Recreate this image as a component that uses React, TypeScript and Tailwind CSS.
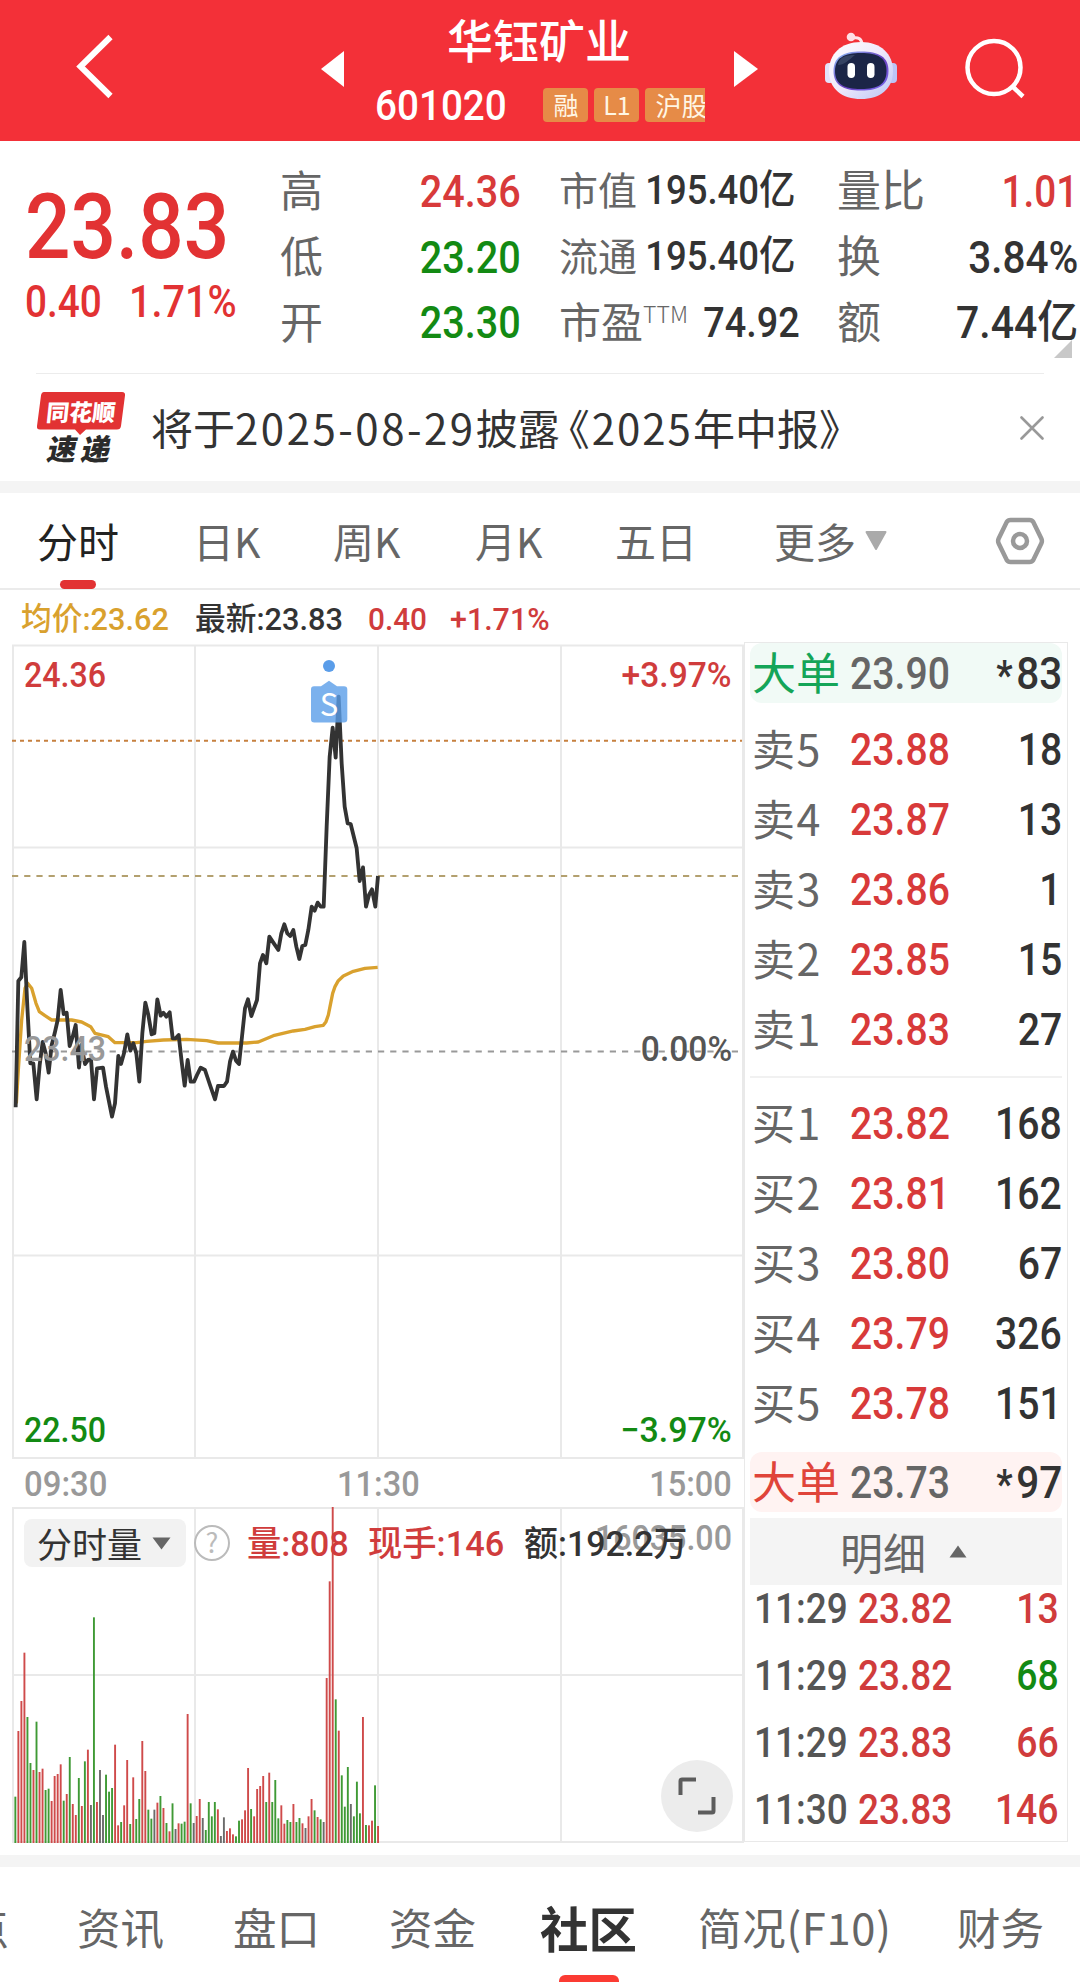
import React from "react";

const RED = "#e23233";

/* One-minute volume bars: [top edge in chart units, tone] where r = up, g = down, k = flat */
const BARS =
  "1190g 993r 903r 758r 951g 1089g 1110r 965g 1116r 1106r 1170g 1166g 1203r 1128r 1122r 1093r 1202g 1182r 1071g 1212r 1245r 1134g 1218r 1084g 1049r 1215k 652g 1206r 1110k 1245k 1124g 1175g 1164g 1034r 1276r 1266g 1216r 1080r 1272g 1132r 1257g 1197g 1023r 1113r 1229g 1256g 1229k 1208r 1188g 1224r 1269g 1294r 1210g 1287k 1270r 1271g 1265g 942r 1210g 1269k 1248r 1197r 1254k 1290g 1206g 1249g 1206g 1228r 1308k 1252k 1293r 1285r 1303r 1309g 1262g 1258r 1231r 1104r 1227g 1249r 1167r 1158r 1128r 1206g 1118r 1206g 1140g 1255g 1216r 1271r 1260g 1266g 1212r 1266g 1254g 1270r 1284k 1249r 1197r 1231g 1251r 1258g 1266k 834r 544r 320r 898g 992r 1126g 1220g 1101g 1212k 1249g 1145g 1240g 951r 1275g 1276r 1262r 1156g 1278r"
    .split(" ")
    .map((s) => ({ top: parseInt(s, 10), tone: s.slice(-1) }));

const TONES: Record<string, string> = { r: "#cf4a4a", g: "#3f9a35", k: "#6b6b6b" };

const PRICE =
  "47,1402 55,1023 64,1012 73,906 82,1100 91,1270 100,1270 110,1378 119,1275 128,1206 137,1240 146,1298 155,1215 164,1180 173,1140 182,1050 191,1122 200,1118 209,1218 218,1190 227,1155 237,1283 244,1215 255,1272 264,1260 273,1258 282,1378 291,1285 309,1283 318,1340 336,1430 345,1390 355,1248 363,1272 372,1240 382,1183 391,1232 400,1210 409,1240 418,1325 427,1180 436,1088 445,1125 455,1183 463,1180 472,1078 482,1127 490,1118 499,1130 509,1117 518,1195 527,1195 536,1185 545,1265 554,1337 563,1260 572,1325 582,1325 591,1305 602,1283 615,1290 630,1335 645,1378 654,1338 672,1338 681,1325 690,1265 699,1235 708,1262 717,1272 726,1190 735,1105 744,1078 754,1128 771,1080 780,970 789,945 799,970 808,890 820,908 835,930 844,880 853,853 862,880 871,888 880,870 889,920 898,957 907,918 916,915 925,870 935,800 944,812 953,788 962,800 971,800 980,560 989,350 998,263 1007,353 1016,170 1025,370 1034,500 1043,550 1052,552 1070,625 1079,723 1089,682 1098,800 1107,765 1116,748 1126,800 1134,708";

const AVERAGE =
  "49,1390 55,1290 65,1140 75,1045 83,1030 95,1045 108,1090 118,1115 135,1127 155,1140 180,1140 215,1140 245,1146 272,1160 285,1180 325,1190 345,1208 410,1208 440,1204 490,1200 560,1198 620,1202 655,1209 740,1209 775,1206 820,1187 880,1173 915,1168 945,1160 970,1156 978,1145 985,1125 990,1100 998,1060 1005,1040 1015,1022 1030,1008 1060,994 1095,985 1133,982";

/* Condensed numeral */
function Num({ children, className = "" }: { children: React.ReactNode; className?: string }) {
  return (
    <span
      className={`inline-block whitespace-nowrap font-medium leading-none [font-family:Roboto,'Noto_Sans_CJK_SC',sans-serif] ${className}`}
    >
      {children}
    </span>
  );
}

function Robot() {
  return (
    <svg className="h-[68px] w-[74px]" viewBox="0 0 74 68">
      <defs>
        <linearGradient id="shell" x1="0" y1="0" x2="1" y2="1">
          <stop offset="0" stopColor="#fff" />
          <stop offset=".5" stopColor="#efe8fb" />
          <stop offset="1" stopColor="#b9c6f5" />
        </linearGradient>
        <linearGradient id="rim" x1="0" y1="0" x2="1" y2="1">
          <stop offset="0" stopColor="#8fc0f7" />
          <stop offset=".55" stopColor="#6a3fc0" />
          <stop offset="1" stopColor="#7a6cf0" />
        </linearGradient>
      </defs>
      <path d="M28 6 Q38 4 38 13" fill="none" stroke="#ffe4ea" strokeWidth="3" />
      <circle cx="27" cy="5" r="4.3" fill="#ffdfe6" />
      <rect x="1" y="31" width="9" height="20" rx="4" fill="#e3e2fb" />
      <rect x="64" y="31" width="9" height="20" rx="4" fill="#bcc4f6" />
      <path d="M37 10C57 10 69 22 69 39C69 57 56 67 37 67C18 67 5 57 5 39C5 22 17 10 37 10Z" fill="url(#shell)" />
      <path d="M37 19.500C55 19.500 64.500 25 64.500 39C64.500 53 55 58.500 37 58.500C19 58.500 9.500 53 9.500 39C9.500 25 19 19.500 37 19.500Z" fill="url(#rim)" />
      <path d="M37 21C54 21 62.500 26 62.500 39C62.500 52 54 57 37 57C20 57 11 52 11 39C11 26 20 21 37 21Z" fill="#1b2547" />
      <path d="M14 33C15 25 22 23 31 23C25 28 20 33 14 33Z" fill="#42506f" opacity=".7" />
      <rect x="23.500" y="31" width="7.500" height="15" rx="3.700" fill="#fff" />
      <rect x="43" y="31" width="7.500" height="15" rx="3.700" fill="#fff" />
    </svg>
  );
}

function Header() {
  return (
    <header className="flex h-[141px] items-start bg-[#f33038]">
      <svg className="ml-[75px] mt-[33px] h-[68px] w-[42px] shrink-0" viewBox="0 0 42 68">
        <path d="M35.500 4L5.500 33.500L35.500 63" fill="none" stroke="#fff" strokeWidth="6" />
      </svg>
      <svg className="ml-[204px] mt-[51px] h-[36px] w-[23px] shrink-0" viewBox="0 0 23 36">
        <path d="M23 0V36L0 18Z" fill="#fff" />
      </svg>
      <div className="ml-[31px] w-[330px] shrink-0">
        <div className="mt-[15px] pr-[2px] text-center text-[46px] font-medium leading-[46px] text-white">华钰矿业</div>
        <div className="mt-[23px] flex h-[42px] items-center">
          <Num className="mt-[2px] w-[169px] origin-left scale-x-[.92] text-[42px] text-white">601020</Num>
          <div className="flex h-[34px] w-[162px] gap-[6px] overflow-hidden text-[25px] leading-[33px] text-[#fff6e4]">
            <span className="w-[45px] shrink-0 rounded bg-[#e68b47] text-center">融</span>
            <span className="w-[45px] shrink-0 rounded bg-[#e68b47] text-center">L1</span>
            <span className="w-[100px] shrink-0 whitespace-nowrap rounded bg-[#e68b47] pl-[10px] text-[26px]">沪股通</span>
          </div>
        </div>
      </div>
      <svg className="ml-[29px] mt-[51px] h-[36px] w-[24px] shrink-0" viewBox="0 0 24 36">
        <path d="M0 0V36L24 18Z" fill="#fff" />
      </svg>
      <div className="ml-[66px] mt-[32px] shrink-0">
        <Robot />
      </div>
      <svg className="ml-[65px] mt-[37px] h-[64px] w-[64px] shrink-0" viewBox="0 0 64 64">
        <circle cx="31" cy="30.500" r="26.500" fill="none" stroke="#fff" strokeWidth="4.500" />
        <path d="M49 49L60 59.500" stroke="#fff" strokeWidth="4.500" />
      </svg>
    </header>
  );
}

const ROW = "flex h-[66px] items-center justify-between whitespace-nowrap";

function Stats() {
  return (
    <section className="relative flex h-[232px] pt-[16px]">
      <div className="w-[280px] pl-[25px] pt-[26px] text-[#e23233]">
        <Num className="origin-left scale-x-[.89] text-[90px]">23.83</Num>
        <div className="mt-[7px] flex">
          <Num className="w-[104px] origin-left scale-x-[.88] text-[44px]">0.40</Num>
          <Num className="origin-left scale-x-[.9] text-[44px]">1.71%</Num>
        </div>
      </div>
      <div className="w-[241px] text-[43px] leading-none text-[#666]">
        <div className={ROW}>
          <span className="-mt-1">高</span>
          <Num className="mt-[2px] origin-right scale-x-[.88] text-[45px] text-[#d83a3a]">24.36</Num>
        </div>
        <div className={ROW}>
          <span className="-mt-1">低</span>
          <Num className="mt-[2px] origin-right scale-x-[.88] text-[45px] text-[#138a13]">23.20</Num>
        </div>
        <div className={ROW}>
          <span className="-mt-1">开</span>
          <Num className="origin-right scale-x-[.88] text-[45px] text-[#138a13]">23.30</Num>
        </div>
      </div>
      <div className="ml-[38px] w-[242px] text-[39px] leading-none text-[#666]">
        <div className={ROW}>
          <span className="-mt-1">市值</span>
          <Num className="relative right-px origin-right scale-x-[.89] text-[41px] text-[#333]">
            <span className="-ml-[10px] pr-[6px]">195.40亿</span>
          </Num>
        </div>
        <div className={ROW}>
          <span className="-mt-1">流通</span>
          <Num className="relative right-px origin-right scale-x-[.89] text-[41px] text-[#333]">
            <span className="-ml-[10px] pr-[6px]">195.40亿</span>
          </Num>
        </div>
        <div className={ROW}>
          <span className="-mt-1 flex text-[42px]">
            市盈<span className="pt-[2px] text-[23px] font-light leading-[24px]">TTM</span>
          </span>
          <Num className="mr-px origin-right scale-x-[.88] text-[43px] text-[#333]">74.92</Num>
        </div>
      </div>
      <div className="ml-[36px] w-[241px] text-[44px] leading-none text-[#666]">
        <div className={ROW}>
          <span className="-mt-1">量比</span>
          <Num className="mt-[2px] origin-right scale-x-[.86] text-[45px] text-[#d83a3a]">1.01</Num>
        </div>
        <div className={ROW}>
          <span className="-mt-1">换</span>
          <Num className="mt-[2px] origin-right scale-x-[.9] text-[45px] text-[#333]">3.84%</Num>
        </div>
        <div className={ROW}>
          <span className="-mt-1">额</span>
          <Num className="origin-right scale-x-[.91] text-[45px] text-[#333]">7.44亿</Num>
        </div>
      </div>
      <svg className="absolute bottom-[15px] right-[8px] h-[18px] w-[18px]" viewBox="0 0 18 18">
        <path d="M18 0V18H0Z" fill="#c8c8c8" />
      </svg>
    </section>
  );
}

function Notice() {
  return (
    <section className="mx-[36px] flex h-[108px] items-center border-t border-[#ececec]">
      <div className="relative h-[74px] w-[90px] shrink-0">
        <svg className="absolute inset-0 h-[74px] w-[90px]" viewBox="0 0 90 74">
          <path d="M8 1H86Q89.500 1 89 4.500L85 35Q84.500 38.500 81 38.500H50L44 44L39 38.500H4Q.500 38.500 1 35L5 4.500Q5.500 1 8 1Z" fill={RED} />
        </svg>
        <div className="relative h-[40px] -skew-x-6 pt-[8px] text-center text-[23px] font-black leading-[24px] text-white">同花顺</div>
        <div className="relative -mt-px h-[34px] -skew-x-12 pl-[3px] text-center text-[29px] font-black leading-[34px] tracking-[5px] text-[#2b2b2b]">速递</div>
      </div>
      <div className="-mt-[2px] ml-[25px] flex-1 whitespace-nowrap text-[42px] leading-none text-[#333]">
        将于<span className="tracking-[2.500px]">2025-08-29</span>披露<span className="-ml-[12px]">《</span>
        <span className="ml-[2px] tracking-[2px]">2025</span>年中报》
      </div>
      <svg className="h-[24px] w-[24px]" viewBox="0 0 24 24">
        <path d="M1.500 1.500L22.500 22.500M22.500 1.500L1.500 22.500" stroke="#999" strokeWidth="2.600" strokeLinecap="round" />
      </svg>
    </section>
  );
}

function PeriodTabs() {
  return (
    <nav className="flex h-[97px] items-start whitespace-nowrap border-b-2 border-[#ebebeb] pl-[36px] text-[41px] leading-[41px] text-[#666]">
      <div className="flex h-[97px] w-[84px] flex-col items-center pt-[27px] text-[#222]">
        分时
        <span className="mt-[19px] h-[9px] w-[36px] rounded-full bg-[#e23233]" />
      </div>
      <div className="ml-[73px] w-[137px] pt-[27px]">日K</div>
      <div className="w-[145px] pl-[3px] pt-[27px]">周K</div>
      <div className="w-[140px] pt-[27px]">月K</div>
      <div className="w-[159px] pt-[27px]">五日</div>
      <div className="w-[90px] pt-[27px]">更多</div>
      <svg className="mt-[38px] h-[20px] w-[24px]" viewBox="0 0 24 20">
        <path d="M2.500 1H21.500L12 18Z" fill="#aaa" stroke="#aaa" strokeWidth="2" strokeLinejoin="round" />
      </svg>
      <svg className="ml-[107px] mt-[24px] h-[48px] w-[50px]" viewBox="0 0 50 48">
        <path d="M15.500 3H34.500Q37 3 38.300 5L46.300 21.500Q47.500 24 46.300 26.500L38.300 43Q37 45 34.500 45H15.500Q13 45 11.700 43L3.700 26.500Q2.500 24 3.700 21.500L11.700 5Q13 3 15.500 3Z" fill="none" stroke="#999" strokeWidth="4.500" />
        <circle cx="25" cy="24" r="7" fill="none" stroke="#999" strokeWidth="4.500" />
      </svg>
    </nav>
  );
}

function PriceChart() {
  return (
    <div className="relative h-[816px]">
      <svg className="absolute inset-0 h-[816px] w-[744px]" viewBox="0 644 744 816">
        <path
          d="M12 645.500H744M12 847.500H744M12 1255.500H744M12 1458H744M13 645V1459M195 645V1459M378 645V1459M561 645V1459M743 645V1459"
          stroke="#e9e9e9"
          strokeWidth="2"
          fill="none"
        />
        <path d="M12 740.700H742" stroke="#c6803f" strokeWidth="2" strokeDasharray="4 4" />
        <path d="M12 876H742" stroke="#b3a06f" strokeWidth="2" strokeDasharray="6.200 6" />
        <path d="M12 1051.500H742" stroke="#999" strokeWidth="2" strokeDasharray="6.200 6" />
        <g transform="translate(0 640) scale(.33333)" fill="none" strokeLinejoin="round">
          <polyline points={AVERAGE} stroke="#d9a12e" strokeWidth="10" />
          <polyline points={PRICE} stroke="#333" strokeWidth="11.500" />
        </g>
        <g fill="#5a9de9">
          <circle cx="329" cy="666" r="6" />
          <path d="M314 686.300H321L329 680.700L337 686.300H344Q347.300 686.300 347.300 689.500V719.300Q347.300 722.600 344 722.600H314.300Q311 722.600 311 719.300V689.500Q311 686.300 314 686.300Z" opacity=".8" />
        </g>
        <text x="329" y="716" textAnchor="middle" fontSize="31" fill="#fff" fontFamily="Noto Sans CJK SC">
          S
        </text>
      </svg>
      <div className="relative flex h-full flex-col justify-between px-[12px] pb-[12px] pt-[14px] text-[35px]">
        <div className="flex justify-between text-[#d03c3c]">
          <Num className="ml-[12px] origin-left scale-x-[.92]">24.36</Num>
          <Num className="origin-right scale-x-[.96]">+3.97%</Num>
        </div>
        <div className="-mt-[8px] flex justify-between">
          <Num className="ml-[12px] origin-left scale-x-[.92] text-[#999]">23.43</Num>
          <Num className="origin-right scale-x-[.96] text-[#555]">0.00%</Num>
        </div>
        <div className="flex justify-between text-[#138a13]">
          <Num className="ml-[12px] origin-left scale-x-[.92]">22.50</Num>
          <Num className="origin-right scale-x-[.97]">−3.97%</Num>
        </div>
      </div>
    </div>
  );
}

function VolumeChart() {
  return (
    <div className="relative h-[336px]">
      <svg className="absolute inset-0 h-[336px] w-[744px]" viewBox="0 1507 744 336">
        <path
          d="M12 1508H744M12 1675H744M12 1842H744M13 1508V1842M195 1508V1842M378 1508V1842M561 1508V1842M743 1508V1842"
          stroke="#e9e9e9"
          strokeWidth="2"
          fill="none"
        />
        {BARS.map((b, i) => (
          <rect
            key={i}
            x={14.4 + i * 3.0225}
            y={1400 + b.top / 3}
            width="1.900"
            height={443 - b.top / 3}
            fill={TONES[b.tone]}
          />
        ))}
      </svg>
      <Num className="absolute right-[12px] top-[14px] origin-right scale-x-[.92] text-[35px] text-[#999]">16035.00</Num>
      <div className="relative flex items-center pl-[24px] pt-[12px] text-[35px] leading-none">
        <div className="flex h-[48px] w-[162px] items-center rounded-lg bg-[#f2f2f2] pl-[13px] text-[35px] text-[#333]">
          <span className="-mt-[2px] whitespace-nowrap">分时量</span>
          <svg className="ml-[10px] h-[13px] w-[19px]" viewBox="0 0 19 13">
            <path d="M.500 .500H18.500L9.500 12.500Z" fill="#666" />
          </svg>
        </div>
        <span className="ml-[8px] flex h-[36px] w-[36px] items-center justify-center rounded-full border-2 border-[#bbb] pb-1 text-[27px] text-[#bbb]">
          ?
        </span>
        <Num className="ml-[17px] mt-[2px] w-[121px] origin-left scale-x-[.98] text-[#d03c3c]">量:808</Num>
        <Num className="mt-[2px] w-[156px] origin-left scale-x-[.98] text-[#d03c3c]">现手:146</Num>
        <Num className="mt-[2px] origin-left scale-x-[.97] text-[#333]">额:192.2万</Num>
      </div>
      <div className="absolute bottom-[11px] right-[11px] flex h-[72px] w-[72px] items-center justify-center rounded-full bg-[#ececec]">
        <svg className="h-[38px] w-[38px]" viewBox="0 0 38 38">
          <path d="M2.500 18V4Q2.500 2.500 4 2.500H18M35.500 20V34Q35.500 35.500 34 35.500H20" fill="none" stroke="#5c5c5c" strokeWidth="4" />
        </svg>
      </div>
    </div>
  );
}

function BookRow({ label, price, qty }: { label: string; price: string; qty: string }) {
  return (
    <div className="flex h-[70px] items-center pl-[2px]">
      <span className="-mt-[2px] w-[98px] whitespace-nowrap text-[43px] leading-none tracking-[1.500px] text-[#666]">{label}</span>
      <Num className="mt-[2px] origin-left scale-x-[.87] text-[45px] text-[#d83a3a]">{price}</Num>
      <Num className="ml-auto mt-[2px] origin-right scale-x-[.87] text-[45px] text-[#333]">{qty}</Num>
    </div>
  );
}

function BigOrder({ price, qty, className }: { price: string; qty: string; className: string }) {
  return (
    <div className={`flex h-[60px] items-center rounded-xl pl-[2px] ${className}`}>
      <span className="-mt-1 w-[98px] whitespace-nowrap text-[44px] leading-none">大单</span>
      <Num className="origin-left scale-x-[.87] text-[45px] text-[#666]">{price}</Num>
      <Num className="ml-auto flex origin-right scale-x-[.9] text-[45px] text-[#333]">
        <span className="mr-[4px] mt-[10px] text-[40px] font-bold">*</span>
        {qty}
      </Num>
    </div>
  );
}

const SELLS = [["卖5", "23.88", "18"], ["卖4", "23.87", "13"], ["卖3", "23.86", "1"], ["卖2", "23.85", "15"], ["卖1", "23.83", "27"]];
const BUYS = [["买1", "23.82", "168"], ["买2", "23.81", "162"], ["买3", "23.80", "67"], ["买4", "23.79", "326"], ["买5", "23.78", "151"]];
const TICKS = [
  ["11:29", "23.82", "13", "text-[#d03c3c]"],
  ["11:29", "23.82", "68", "text-[#138a13]"],
  ["11:29", "23.83", "66", "text-[#d03c3c]"],
  ["11:30", "23.83", "146", "text-[#d03c3c]"],
];

function OrderBook() {
  return (
    <aside className="mt-[52px] h-[1200px] w-[324px] border border-[#e9e9e9] pl-[5px] pr-[5px]">
      <BigOrder price="23.90" qty="83" className="bg-[#f1faf6] text-[#14a558]" />
      <div className="mt-[10px]">
        {SELLS.map(([l, p, q]) => (
          <BookRow key={l} label={l} price={p} qty={q} />
        ))}
      </div>
      <div className="mt-[13px] h-[2px] bg-[#f1f1f1]" />
      <div className="mt-[9px]">
        {BUYS.map(([l, p, q]) => (
          <BookRow key={l} label={l} price={p} qty={q} />
        ))}
      </div>
      <div className="mt-[15px]">
        <BigOrder price="23.73" qty="97" className="bg-[#fff3f2] text-[#e0443a]" />
      </div>
      <div className="mt-[6px] flex h-[67px] items-center bg-[#f4f4f4] pl-[90px] text-[43px] leading-none text-[#666]">
        <span className="-mt-px">明细</span>
        <svg className="ml-[23px] h-[13px] w-[18px]" viewBox="0 0 18 13">
          <path d="M.500 12.500H17.500L9 .500Z" fill="#666" />
        </svg>
      </div>
      <div className="-mt-[10px]">
        {TICKS.map(([t, p, q, c], i) => (
          <div key={i} className="flex h-[67px] items-center pl-[4px] pr-[3px] text-[42px] text-[#d03c3c]">
            <Num className="w-[104px] origin-left scale-x-[.88] text-[#555]">{t}</Num>
            <Num className="origin-left scale-x-[.88]">{p}</Num>
            <Num className={`ml-auto origin-right scale-x-[.89] ${c}`}>{q}</Num>
          </div>
        ))}
      </div>
    </aside>
  );
}

function BottomTabs() {
  return (
    <nav className="flex h-[115px] overflow-hidden whitespace-nowrap pt-[38px] text-[43.500px] leading-[44px] text-[#666]">
      <span className="-ml-[78px] w-[155px] shrink-0">热点</span>
      <span className="w-[156px]">资讯</span>
      <span className="w-[156px]">盘口</span>
      <span className="w-[151px]">资金</span>
      <div className="flex h-[77px] w-[158px] flex-col">
        <span className="text-[48.500px] font-bold text-[#333]">社区</span>
        <span className="ml-[19px] mt-[26px] h-[20px] w-[60px] shrink-0 rounded-md bg-[#fb3b33]" />
      </div>
      <span className="w-[259px] tracking-[.700px]">简况(F10)</span>
      <span>财务</span>
    </nav>
  );
}

export default function App() {
  return (
    <div className="h-[1982px] w-[1080px] overflow-hidden bg-white [font-family:'Noto_Sans_CJK_SC',sans-serif]">
      <Header />
      <Stats />
      <Notice />
      <div className="h-[12px] bg-[#f4f4f4]" />
      <PeriodTabs />
      <main className="flex h-[1265px]">
        <div className="w-[744px]">
          <div className="flex h-[54px] items-center pl-[21px] pt-[4px] text-[32px]">
            <Num className="w-[174px] origin-left scale-x-[.96] text-[#d9a12e]">均价:23.62</Num>
            <Num className="w-[173px] origin-left scale-x-[.96] text-[#333]">最新:23.83</Num>
            <Num className="w-[82px] origin-left scale-x-[.93] text-[#d03c3c]">0.40</Num>
            <Num className="origin-left scale-x-[.95] text-[#d03c3c]">+1.71%</Num>
          </div>
          <PriceChart />
          <div className="flex h-[47px] items-center justify-between px-[12px] pt-[2px] text-[35px] text-[#999]">
            <Num className="ml-[12px] origin-left scale-x-[.94]">09:30</Num>
            <Num className="scale-x-[.93]">11:30</Num>
            <Num className="origin-right scale-x-[.93]">15:00</Num>
          </div>
          <VolumeChart />
        </div>
        <OrderBook />
      </main>
      <div className="h-[12px] bg-[#f4f4f4]" />
      <BottomTabs />
    </div>
  );
}
